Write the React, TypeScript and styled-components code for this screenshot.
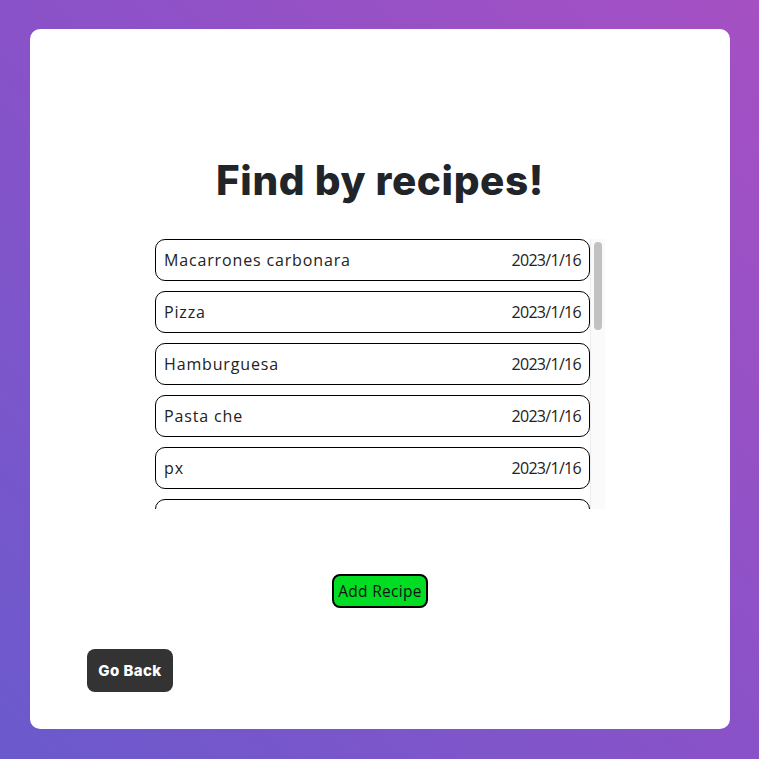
import React from 'react';
import styled, { createGlobalStyle } from 'styled-components';

interface Recipe {
  id: number;
  name: string;
  date: string;
}

const recipes: Recipe[] = [
  { id: 1, name: 'Macarrones carbonara', date: '2023/1/16' },
  { id: 2, name: 'Pizza', date: '2023/1/16' },
  { id: 3, name: 'Hamburguesa', date: '2023/1/16' },
  { id: 4, name: 'Pasta che', date: '2023/1/16' },
  { id: 5, name: 'px', date: '2023/1/16' },
  { id: 6, name: 'Tortilla', date: '2023/1/16' },
  { id: 7, name: 'Paella', date: '2023/1/16' },
];

const GlobalStyle = createGlobalStyle`
  html, body {
    margin: 0;
    padding: 0;
  }
  body {
    font-family: 'Open Sans', 'Liberation Sans', sans-serif;
  }
`;

const Page = styled.div`
  width: 759px;
  height: 759px;
  box-sizing: border-box;
  padding: 29px 29px 30px 30px;
  background: linear-gradient(45deg, #6a5acd 0%, #8a52c8 50%, #a550c3 100%);
`;

const Card = styled.div`
  height: 100%;
  background: #ffffff;
  border-radius: 10px;
  display: flex;
  flex-direction: column;
  align-items: center;
  padding-top: 126px;
  box-sizing: border-box;
`;

const Title = styled.h1`
  margin: 0 0 32px;
  font-family: Inter, 'Liberation Sans', sans-serif;
  font-weight: 800;
  font-size: 40.5px;
  line-height: 52px;
  color: #212529;
  letter-spacing: 0.6px;
`;

const ListFrame = styled.div`
  width: 450px;
  height: 270px;
  display: flex;
`;

const List = styled.div`
  flex: 1;
  overflow: hidden;
`;

const ScrollTrack = styled.div`
  width: 14px;
  position: relative;
  background: #fafafa;
  border-left: 1px solid #ececec;
`;

const ScrollThumb = styled.div`
  position: absolute;
  top: 3px;
  left: 3px;
  width: 8px;
  height: 88px;
  border-radius: 4px;
  background: #c1c1c1;
`;

const Item = styled.div`
  height: 42px;
  box-sizing: border-box;
  margin-bottom: 10px;
  padding: 0 8px 0 8px;
  border: 1px solid #000;
  border-radius: 10px;
  display: flex;
  align-items: center;
  justify-content: space-between;
  font-size: 16px;
  color: #222;
`;

const Name = styled.span`
  letter-spacing: 0.85px;
`;

const DateText = styled.span`
  letter-spacing: -0.7px;
`;

const AddButton = styled.button`
  margin-top: 65px;
  padding: 0 2px;
  height: 34px;
  width: 96px;
  background: #00dd22;
  border: 2px solid #000;
  border-radius: 8px;
  font-family: 'Open Sans', 'Liberation Sans', sans-serif;
  font-size: 15.5px;
  letter-spacing: 0.3px;
  color: #111;
  white-space: nowrap;
  cursor: pointer;
`;

const Footer = styled.div`
  align-self: stretch;
  padding: 41px 0 0 57px;
`;

const BackButton = styled.button`
  width: 86px;
  height: 43px;
  background: #333333;
  color: #fff;
  border: none;
  border-radius: 8px;
  font-family: Inter, 'Liberation Sans', sans-serif;
  font-weight: 800;
  font-size: 15px;
  letter-spacing: 0.4px;
  cursor: pointer;
`;

const App: React.FC = () => {
  return (
    <>
      <GlobalStyle />
      <Page>
        <Card>
          <Title>Find by recipes!</Title>
          <ListFrame>
            <List>
              {recipes.map((recipe) => (
                <Item key={recipe.id}>
                  <Name>{recipe.name}</Name>
                  <DateText>{recipe.date}</DateText>
                </Item>
              ))}
            </List>
            <ScrollTrack>
              <ScrollThumb />
            </ScrollTrack>
          </ListFrame>
          <AddButton>Add Recipe</AddButton>
          <Footer>
            <BackButton>Go Back</BackButton>
          </Footer>
        </Card>
      </Page>
    </>
  );
};

export default App;
